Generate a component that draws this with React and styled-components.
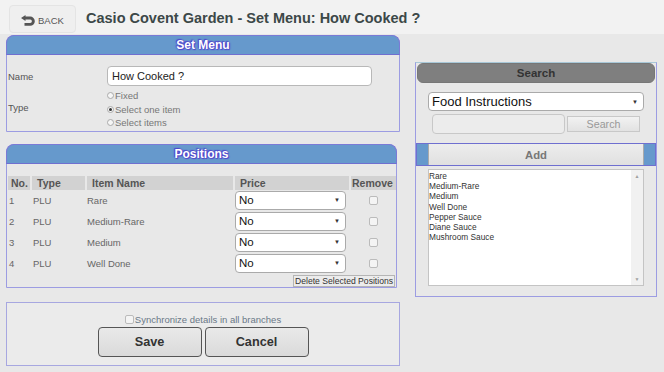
import React from 'react';
import styled, { createGlobalStyle } from 'styled-components';

const Global = createGlobalStyle`
  html, body { margin: 0; padding: 0; background: #e8e8e8; }
  body { font-family: "Liberation Sans", Arial, sans-serif; }
  * { box-sizing: border-box; }
`;

const Page = styled.div`
  width: 664px;
  height: 372px;
  overflow: hidden;
  background: #e8e8e8;
`;

const TopBar = styled.div`
  height: 34px;
  background: #f2f2f2;
  display: flex;
  align-items: flex-start;
  padding: 5px 0 0 9px;
  gap: 10px;
`;

const BackButton = styled.div`
  width: 67px;
  height: 28px;
  border: 1px solid #e4e4e4;
  border-radius: 4px;
  background: #efefef;
  display: flex;
  align-items: center;
  padding-left: 11px;
  gap: 3px;
  color: #555;
  font-size: 9.5px;
  padding-top: 2px;
`;

const Title = styled.h1`
  margin: 0;
  padding-top: 5px;
  font-size: 14.5px;
  font-weight: bold;
  color: #3c4848;
  white-space: nowrap;
`;

const Main = styled.div`
  display: flex;
  align-items: flex-start;
  padding-left: 6px;
`;

const LeftCol = styled.div`
  width: 394px;
  display: flex;
  flex-direction: column;
  padding-top: 1px;
`;

const Panel = styled.section`
  width: ${p => p.$w || 394}px;
  border: 1px solid #9c9ce2;
  border-radius: 8px 8px 0 0;
  margin-bottom: ${p => p.$mb || 0}px;
  background: #e8e8e8;
`;

const PanelHeader = styled.div`
  height: 20px;
  margin: -1px -1px 0 -1px;
  background: #6699cc;
  border: 1px solid #7a7ad6;
  border-bottom-color: #6f6fd0;
  border-radius: 8px 8px 0 0;
  display: flex;
  align-items: center;
  justify-content: center;
  color: #fff;
  font-weight: bold;
  font-size: 12px;
  text-shadow: 0 0 1px #4a3fc8, 0 0 2px #4a3fc8, 1px 1px 1px #5548d0, -1px -1px 1px #5548d0;
`;

const FormGrid = styled.div`
  display: grid;
  grid-template-columns: 99px 1fr;
  padding: 11px 0 1px 1px;
  align-items: center;
  font-size: 9.5px;
  color: #555;
`;

const Label = styled.div`
  color: #555;
`;

const TextInput = styled.div`
  width: 265px;
  height: 20px;
  background: #fff;
  border: 1px solid #b8b8b8;
  border-radius: 4px;
  font-size: 11px;
  color: #222;
  display: flex;
  align-items: center;
  padding-left: 4px;
`;

const RadioGroup = styled.div`
  display: flex;
  flex-direction: column;
  padding-top: 3px;
`;

const RadioRow = styled.div`
  height: 13.5px;
  display: flex;
  align-items: center;
  gap: 1px;
  color: #777;
  font-size: 9.5px;
`;

const RadioDot = styled.span`
  width: 7px;
  height: 7px;
  border-radius: 50%;
  border: 1px solid #aaa;
  background: #f6f6f6;
  display: inline-flex;
  align-items: center;
  justify-content: center;
  &::after {
    content: '';
    width: 3px;
    height: 3px;
    border-radius: 50%;
    background: ${p => (p.$on ? '#333' : 'transparent')};
  }
`;

const PosGrid = styled.div`
  display: grid;
  grid-template-columns: 22px 53px 146px 114px 45px;
  column-gap: 2px;
  padding: 12px 0 0 1px;
  font-size: 9.5px;
  color: #666;
  align-items: center;
`;

const HeadCell = styled.div`
  height: 14px;
  background: #d2d2d2;
  color: #555;
  font-weight: bold;
  font-size: 10.5px;
  display: flex;
  align-items: center;
  padding-left: ${p => (p.$pl != null ? p.$pl : 5)}px;
  justify-content: ${p => (p.$center ? 'center' : 'flex-start')};
`;

const Cell = styled.div`
  height: 21px;
  display: flex;
  align-items: center;
  padding-left: ${p => p.$pl || 0}px;
  justify-content: ${p => (p.$center ? 'center' : 'flex-start')};
`;

const SelectBox = styled.div`
  width: ${p => p.$w}px;
  height: ${p => p.$h}px;
  background: #fff;
  border: 1px solid #aaa;
  border-radius: 4px;
  display: flex;
  align-items: center;
  justify-content: space-between;
  padding: 0 5px 0 3px;
  font-size: ${p => p.$fs}px;
  color: #111;
`;

const Arrow = styled.span`
  font-size: 6px;
  color: #333;
`;

const Check = styled.span`
  width: 9px;
  height: 9px;
  border: 1px solid #bbb;
  border-radius: 2px;
  background: #f4f4f4;
  display: inline-block;
`;

const PosFooter = styled.div`
  display: flex;
  justify-content: flex-end;
  padding: 1px 1px 0 0;
`;

const SmallButton = styled.div`
  height: 12px;
  padding: 0 1px;
  border: 1px solid #b5b5b5;
  background: #ececec;
  font-size: 8.6px;
  color: #333;
  display: flex;
  align-items: center;
`;

const ActionPanel = styled.section`
  width: 394px;
  height: 64px;
  border: 1px solid #a7a7e0;
  background: #ebebeb;
  display: flex;
  flex-direction: column;
  align-items: center;
  padding-top: 11px;
`;

const SyncRow = styled.div`
  display: flex;
  align-items: center;
  gap: 1px;
  font-size: 9.5px;
  color: #6a7888;
  height: 12px;
`;

const ButtonRow = styled.div`
  display: flex;
  gap: 3px;
  margin-top: 1px;
`;

const BigButton = styled.div`
  width: 104px;
  height: 30px;
  border: 1px solid #555;
  border-radius: 4px;
  background: linear-gradient(#e9e9e9, #dadada);
  display: flex;
  align-items: center;
  justify-content: center;
  font-weight: bold;
  font-size: 12.7px;
  color: #333;
`;

const RightPanel = styled.section`
  margin-left: 15px;
  margin-top: 28px;
  width: 242px;
  height: 235px;
  border: 1px solid #9c9ce2;
  border-top-color: #a8c8d8;
  display: flex;
  flex-direction: column;
`;

const SearchHeader = styled.div`
  margin: 0 1px;
  height: 20px;
  background: #7f7f7f;
  border-radius: 6px;
  border: 1px solid #777;
  display: flex;
  align-items: center;
  justify-content: center;
  font-weight: bold;
  font-size: 11.5px;
  color: #333;
`;

const SearchBody = styled.div`
  display: flex;
  flex-direction: column;
  align-items: flex-start;
  padding: 9px 0 0 12px;
`;

const SearchLine = styled.div`
  display: flex;
  align-items: center;
  gap: 2px;
  margin: 3px 0 0 4px;
`;

const SearchInput = styled.div`
  width: 133px;
  height: 20px;
  border: 1px solid #c8c8c8;
  border-radius: 4px;
  background: #ececec;
`;

const SearchButton = styled.div`
  width: 73px;
  height: 16px;
  border: 1px solid #c8c8c8;
  background: linear-gradient(#f2f2f2, #e2e2e2);
  font-size: 10.7px;
  color: #999;
  display: flex;
  align-items: center;
  justify-content: center;
`;

const AddBar = styled.div`
  margin-top: 9px;
  height: 23px;
  background: #6699cc;
  border: 1px solid #6f6fd0;
  display: flex;
  padding: 0 11px;
`;

const AddButton = styled.div`
  flex: 1;
  background: linear-gradient(#ededed, #e0e0e0);
  border-left: 1px solid #aaa;
  border-right: 1px solid #aaa;
  display: flex;
  align-items: center;
  justify-content: center;
  font-weight: bold;
  font-size: 11.3px;
  color: #777;
`;

const ListBox = styled.div`
  margin: 3px 0 0 12px;
  width: 216px;
  height: 117px;
  background: #fff;
  border: 1px solid #c4c4c4;
  display: flex;
`;

const ListItems = styled.div`
  flex: 1;
  padding-top: 1px;
  font-size: 8.3px;
  line-height: 10.2px;
  color: #333;
`;

const ScrollTrack = styled.div`
  width: 12px;
  background: #f1f1f1;
  display: flex;
  flex-direction: column;
  justify-content: space-between;
  align-items: center;
  padding: 3px 0;
  font-size: 5px;
  color: #a0a0a0;
`;

const BackIcon = () => (
  <svg width="14" height="11" viewBox="0 0 14 11">
    <path
      d="M0 3 L4.5 0 V1.6 H9.2 A4.6 4.6 0 0 1 9.2 10.8 H3.5 V7.9 H9.2 A1.7 1.7 0 0 0 9.2 4.5 H4.5 V6 Z"
      fill="#555"
    />
  </svg>
);

const positions = ['Rare', 'Medium-Rare', 'Medium', 'Well Done'];
const listItems = ['Rare', 'Medium-Rare', 'Medium', 'Well Done', 'Pepper Sauce', 'Diane Sauce', 'Mushroom Sauce'];

export default function App() {
  return (
    <Page>
      <Global />
      <TopBar>
        <BackButton>
          <BackIcon />
          <span>BACK</span>
        </BackButton>
        <Title>Casio Covent Garden - Set Menu: How Cooked ?</Title>
      </TopBar>
      <Main>
        <LeftCol>
          <Panel $mb={12}>
            <PanelHeader>Set Menu</PanelHeader>
            <FormGrid>
              <Label>Name</Label>
              <TextInput>How Cooked ?</TextInput>
              <Label>Type</Label>
              <RadioGroup>
                <RadioRow><RadioDot />Fixed</RadioRow>
                <RadioRow><RadioDot $on />Select one item</RadioRow>
                <RadioRow><RadioDot />Select items</RadioRow>
              </RadioGroup>
            </FormGrid>
          </Panel>
          <Panel $w={391} $mb={14}>
            <PanelHeader>Positions</PanelHeader>
            <PosGrid>
              <HeadCell $pl={3}>No.</HeadCell>
              <HeadCell>Type</HeadCell>
              <HeadCell>Item Name</HeadCell>
              <HeadCell>Price</HeadCell>
              <HeadCell $pl={1}>Remove</HeadCell>
              {positions.map((name, i) => (
                <React.Fragment key={name}>
                  <Cell $pl={1}>{i + 1}</Cell>
                  <Cell $pl={1}>PLU</Cell>
                  <Cell>{name}</Cell>
                  <Cell>
                    <SelectBox $w={111} $h={19} $fs={11.5}>
                      <span>No</span>
                      <Arrow>▼</Arrow>
                    </SelectBox>
                  </Cell>
                  <Cell $center><Check /></Cell>
                </React.Fragment>
              ))}
            </PosGrid>
            <PosFooter>
              <SmallButton>Delete Selected Positions</SmallButton>
            </PosFooter>
          </Panel>
          <ActionPanel>
            <SyncRow><Check />Synchronize details in all branches</SyncRow>
            <ButtonRow>
              <BigButton>Save</BigButton>
              <BigButton>Cancel</BigButton>
            </ButtonRow>
          </ActionPanel>
        </LeftCol>
        <RightPanel>
          <SearchHeader>Search</SearchHeader>
          <SearchBody>
            <SelectBox $w={216} $h={19} $fs={13}>
              <span>Food Instructions</span>
              <Arrow>▼</Arrow>
            </SelectBox>
            <SearchLine>
              <SearchInput />
              <SearchButton>Search</SearchButton>
            </SearchLine>
          </SearchBody>
          <AddBar>
            <AddButton>Add</AddButton>
          </AddBar>
          <ListBox>
            <ListItems>
              {listItems.map(t => <div key={t}>{t}</div>)}
            </ListItems>
            <ScrollTrack>
              <span>▲</span>
              <span>▼</span>
            </ScrollTrack>
          </ListBox>
        </RightPanel>
      </Main>
    </Page>
  );
}
